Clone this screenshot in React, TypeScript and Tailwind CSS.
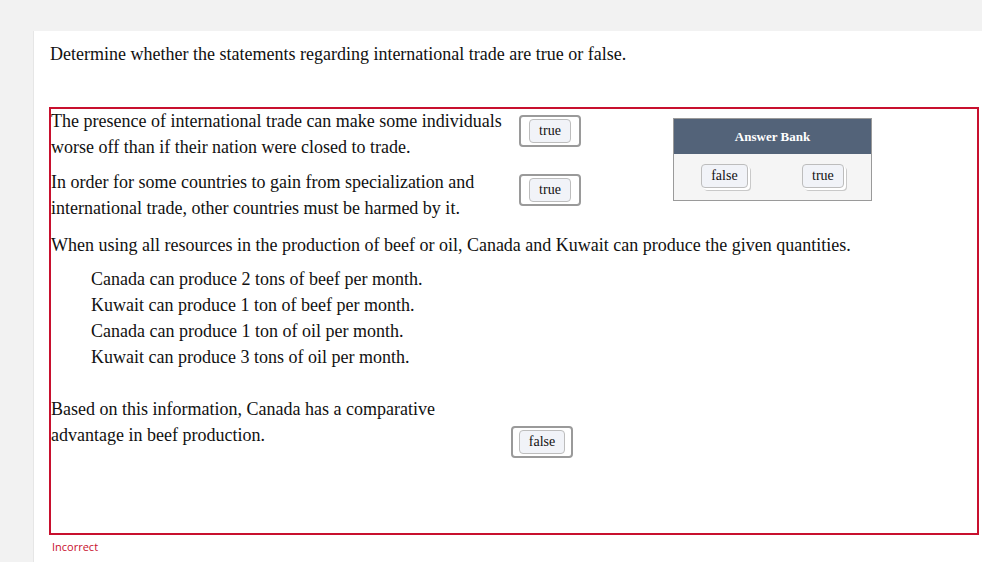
import React from 'react';

const serif = { fontFamily: '"Liberation Serif", "Times New Roman", serif' };

const Chip: React.FC<{ label: string; stacked?: boolean }> = ({ label, stacked }) => (
  <div
    className={`h-[24px] px-[9px] flex items-center justify-center rounded-[4px] border border-[#bdbdbd] bg-[#f1f3f8] text-[14px] leading-none text-[#111] ${
      stacked ? 'shadow-[2px_2px_0_0_#ffffff,3px_3px_0_0_#c9c9c9]' : ''
    }`}
  >
    {label}
  </div>
);

const DropZone: React.FC<{ label: string; className?: string }> = ({ label, className }) => (
  <div
    className={`w-[62px] h-[32px] flex items-center justify-center rounded-[4px] border-2 border-[#9a9a9a] bg-white ${className ?? ''}`}
  >
    <Chip label={label} />
  </div>
);

const Statement: React.FC<{ text: string; answer: string; zoneClass: string; textClass?: string }> = ({
  text,
  answer,
  zoneClass,
  textClass,
}) => (
  <div className="flex items-start">
    <p className={`w-[460px] ${textClass ?? ''}`}>{text}</p>
    <DropZone label={answer} className={zoneClass} />
  </div>
);

const AnswerBank: React.FC = () => (
  <div className="self-start mt-[10px] w-[199px] border border-[#9a9a9a]">
    <div className="h-[35px] bg-[#536379] flex items-center justify-center text-white text-[13px] leading-none font-bold">
      Answer Bank
    </div>
    <div className="h-[46px] bg-[#f5f5f5] flex items-start justify-around pt-[10px]">
      <Chip label="false" stacked />
      <Chip label="true" stacked />
    </div>
  </div>
);

const App: React.FC = () => {
  const quantities = [
    'Canada can produce 2 tons of beef per month.',
    'Kuwait can produce 1 ton of beef per month.',
    'Canada can produce 1 ton of oil per month.',
    'Kuwait can produce 3 tons of oil per month.',
  ];

  return (
    <div className="w-[982px] h-[562px] bg-[#f2f2f2] overflow-hidden pt-[31px] pl-[33px]" style={serif}>
      <div className="bg-white h-full border-l border-[#e6e6e6] pl-[15px] pr-[3px] pt-[12px]">
        <h1 className="text-[18px] leading-[22px] text-[#111] pl-[1px]">
          Determine whether the statements regarding international trade are true or false.
        </h1>

        <div className="mt-[42px] h-[428px] border-2 border-[#c8102e] text-[18px] leading-[26px] text-[#111]">
          <div className="-mt-px">
            <div className="flex">
              <div className="w-[622px] flex flex-col gap-[9px]">
                <Statement
                  text="The presence of international trade can make some individuals worse off than if their nation were closed to trade."
                  answer="true"
                  zoneClass="ml-[8px] mt-[7px]"
                />
                <Statement
                  text="In order for some countries to gain from specialization and international trade, other countries must be harmed by it."
                  answer="true"
                  zoneClass="ml-[8px] mt-[5px]"
                />
              </div>
              <AnswerBank />
            </div>

            <p className="mt-[11px]">
              When using all resources in the production of beef or oil, Canada and Kuwait can produce the given quantities.
            </p>

            <ul className="mt-[8px] pl-[40px]">
              {quantities.map((q) => (
                <li key={q}>{q}</li>
              ))}
            </ul>

            <div className="mt-[26px]">
              <Statement
                text="Based on this information, Canada has a comparative advantage in beef production."
                answer="false"
                zoneClass="mt-[30px]"
                textClass="pr-[66px]"
              />
            </div>
          </div>
        </div>

        <p
          className="mt-[4px] pl-[3px] text-[11px] leading-[16px] text-[#c8102e]"
          style={{ fontFamily: '"Open Sans", "Noto Sans", sans-serif' }}
        >
          Incorrect
        </p>
      </div>
    </div>
  );
};

export default App;
